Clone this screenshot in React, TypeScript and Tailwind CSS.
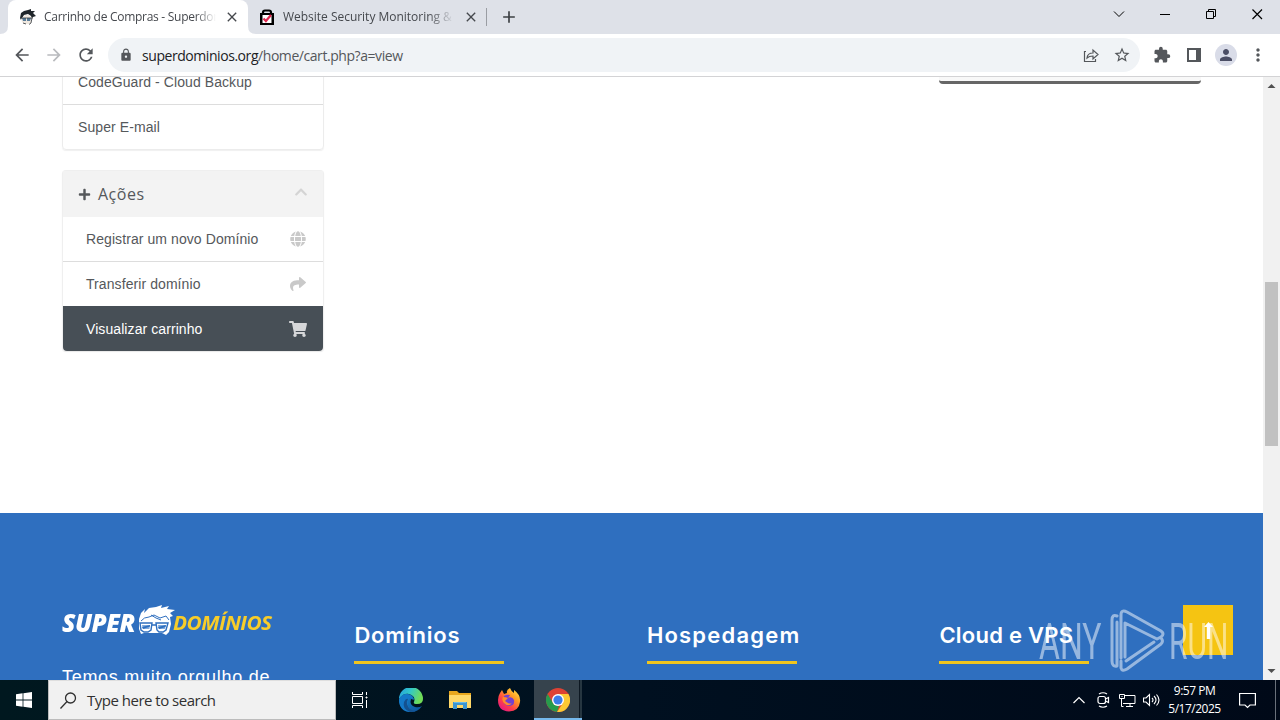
import React from 'react';
import { FaChevronUp, FaGlobe, FaPlus, FaShare, FaShoppingCart } from 'react-icons/fa';
import { MdAdd, MdArrowBack, MdArrowForward, MdClose, MdExtension, MdLock, MdMoreVert, MdPerson, MdRefresh, MdStarBorder } from 'react-icons/md';

function HeroHead({ className }: { className: string }) {
  return (
    <svg className={className} viewBox="0 0 38 31">
      <path fill="#fff" d="M1 14 3 8 7 4 6 8 11 3 18 2 24 0 23 3 31 1 29 4 37 5 32 8 35 11 32 12 33 19 31 27 28 30 24 28H6L3 29 1 24Z" />
      <path fill="none" stroke="#2f6fbf" strokeWidth="1" d="M3 16q3-4 8-4l5-2 6 3 6-2 3 4M13 10l5 3 5 2" />
      <path fill="none" stroke="#2f6fbf" strokeWidth="1.400" d="M2 18h12l-1 7-3 2H6l-3-2zM18 18h12l-2 7-3 2h-4l-2-2zM14 20h4" />
      <path fill="#7fa9dc" d="M4 20h8l-.6 4H5zM20 20h8l-1.200 4h-6z" />
      <path fill="#2f6fbf" d="M4 22l8-2v1.500L5 24zM20 22l8-2-.5 2-6.500 2z" />
    </svg>
  );
}

function HeroFavicon() {
  return (
    <svg className="size-4 shrink-0" viewBox="0 0 16 16">
      <path fill="#20262b" d="M0 9 1 4l3-2 4-1 3-1v2l4 0-2 2 3 3-3 1-1 2-1-3-3-2-4 1-3 5Z" />
      <path fill="#efe8e0" d="M1 10 5 6l4 0 3 3-1 5-2 1H4l-2-2z" />
      <path fill="#587c98" d="M2 9h4l0 3H3zM7 9h4l-1 3H7z" />
      <path fill="none" stroke="#30353a" strokeWidth=".8" d="M1 9h11M12 9l-1 5-2 1.500M3 14l3 1" />
    </svg>
  );
}

function LockFavicon() {
  return (
    <svg className="-ml-px size-4 shrink-0" viewBox="0 0 16 16">
      <path fill="none" stroke="#000" strokeWidth="2.2" d="M4 5V3.500q0-2 2-2h4q2 0 2 2V5" />
      <path fill="#000" d="M1 4h14v12H1z" />
      <path fill="#fff" d="M3.500 6h9v8h-9z" />
      <path fill="none" stroke="#e02850" strokeWidth="2.200" d="m4.500 9.500 2.400 2.500L12 6" />
    </svg>
  );
}

function TabStrip() {
  return (
    <header className="flex h-[34px] bg-[#dee1e8] pl-2">
      <div className="relative flex w-60 items-center rounded-t-lg bg-white pl-3">
        <svg className="absolute bottom-0 -left-2 size-2" viewBox="0 0 8 8"><path fill="#fff" d="M8 0v8H0q8 0 8-8z" /></svg>
        <svg className="absolute -right-2 bottom-0 size-2" viewBox="0 0 8 8"><path fill="#fff" d="M0 0v8h8q-8 0-8-8z" /></svg>
        <HeroFavicon />
        <span className="ml-2 w-[172px] overflow-hidden mask-r-from-88% text-[12px] tracking-[-0.28px] whitespace-nowrap text-[#45484d]">Carrinho de Compras - Superdominios</span>
        <MdClose className="ml-2 size-4 text-[#45484d]" />
      </div>
      <div className="my-2 flex w-[239px] items-center border-r border-[#9a9da3] pl-3">
        <LockFavicon />
        <span className="ml-2 w-[171px] overflow-hidden mask-r-from-85% text-[12px] tracking-[-0.02px] whitespace-nowrap text-[#45484d]">Website Security Monitoring &amp; Malware</span>
        <MdClose className="ml-[9px] size-4 text-[#45484d]" />
      </div>
      <MdAdd className="mt-[7px] ml-[12px] size-5 text-[#3c4043]" />
      <div className="ml-auto flex text-black">
        <svg className="h-[34px] w-[40px]" viewBox="0 0 40 34" fill="none" stroke="currentColor"><path d="m8 11.500 5 5 5-5" /></svg>
        <svg className="h-[34px] w-[46px]" viewBox="0 0 46 34" fill="none" stroke="currentColor"><path d="M14 14.500h10" /></svg>
        <svg className="h-[34px] w-[46px]" viewBox="0 0 46 34" fill="none" stroke="currentColor"><path d="M14.500 11.500h7v7h-7zM16.500 11.500v-2h7v7h-2" /></svg>
        <svg className="ml-[14px] h-[34px] w-[28px]" viewBox="0 0 28 34" fill="none" stroke="currentColor" strokeWidth="1.200"><path d="m.5 9.500 9.500 9.500M10 9.500.5 19" /></svg>
      </div>
    </header>
  );
}

function Toolbar() {
  return (
    <div className="flex h-[43px] items-center border-b border-[#d3d3d5] bg-white text-[#54575b]">
      <MdArrowBack className="ml-3 size-5" />
      <MdArrowForward className="ml-3 size-5 text-[#b9bbbe]" />
      <MdRefresh className="ml-3 size-5" />
      <div className="ml-3 flex h-[34px] w-[1032px] items-center rounded-full bg-[#f0f3f6] pr-2.5 pl-[11px]">
        <MdLock className="size-[14px]" />
        <span className="ml-[9px] text-[14px] tracking-[-0.44px] whitespace-nowrap"><span className="text-[#202124]">superdominios.org</span>/home/cart.php?a=view</span>
        <svg className="ml-auto size-4" viewBox="0 0 16 16" fill="none" stroke="currentColor" strokeWidth="1.200"><path d="M3 4.500H1.500v10h11V12M4 11q.5-5 6-5V3l5 4.500L10 12V9q-4 0-6 2z" /></svg>
        <MdStarBorder className="mr-[-1px] ml-[14px] size-[18px]" />
      </div>
      <MdExtension className="ml-[13px] size-[18px]" />
      <svg className="ml-[15px] size-4" viewBox="0 0 16 16"><path fill="currentColor" fillRule="evenodd" d="M1 1h14v14H1zM3 3v10h7V3z" /></svg>
      <span className="ml-[13px] grid size-[22px] place-items-center rounded-full bg-[#d9dce8]"><MdPerson className="size-[18px] text-[#4b4e65]" /></span>
      <MdMoreVert className="ml-[11px] size-5" />
    </div>
  );
}

function Sidebar() {
  return (
    <aside className="ml-[62px] w-[262px] font-['Liberation_Sans',sans-serif] text-[14px] tracking-[0.08px] text-[#55585b]">
      <div className="-mt-[18px] rounded-b border border-[#ececec] shadow-[0_1px_1px_#00000010]">
        <div className="h-[45px] border-b border-[#dddddd] px-[15px] leading-[44px]">CodeGuard - Cloud Backup</div>
        <div className="h-[44px] px-[15px] leading-[44px]">Super E-mail</div>
      </div>
      <div className="mt-[20px] rounded border border-[#efefef] border-b-0 shadow-[0_1px_1px_#00000018]">
        <div className="flex h-[46px] items-center bg-[#f3f3f3] px-[15px] font-['Open_Sans',sans-serif] text-[16px] tracking-[0.5px]">
          <FaPlus className="size-[13px]" />
          <span className="ml-[7px]">Ações</span>
          <FaChevronUp className="mb-[5px] ml-auto size-[14px] text-[#d4d4d4]" />
        </div>
        <div className="flex h-[45px] items-center border-b border-[#dddddd] pr-[17px] pl-[23px]">Registrar um novo Domínio<FaGlobe className="ml-auto size-4 text-[#c9c9c9]" /></div>
        <div className="flex h-[44px] items-center pr-[17px] pl-[23px]">Transferir domínio<FaShare className="ml-auto size-4 text-[#c9c9c9]" /></div>
        <div className="flex h-[45px] items-center rounded-b bg-[#474f56] pt-px pr-[16px] pl-[23px] text-white">Visualizar carrinho<FaShoppingCart className="ml-auto size-[18px] text-[#d6d7d9]" /></div>
      </div>
    </aside>
  );
}

function FooterColumn({ title, spacing }: { title: string; spacing: string }) {
  return (
    <div className="w-[292.5px] px-[15px] pt-[106px]">
      <h4 className={`h-[42px] font-['Inter',sans-serif] text-[22px] leading-[32px] font-semibold whitespace-nowrap text-white ${spacing}`}>{title}</h4>
      <div className="h-[3px] w-[150px] bg-[#f0c51e]" />
    </div>
  );
}

function Watermark() {
  return (
    <div className="absolute top-[609px] left-[1039px] flex h-[63px] w-[194px] items-center font-['Roboto',sans-serif] text-[50px] leading-[63px] text-white opacity-50">
      <span className="w-[70px] pt-[3px]"><span className="inline-block origin-left scale-x-[0.64]">ANY</span></span>
      <svg className="h-[63px] w-[56px] shrink-0" viewBox="0 0 56 63" fill="none" stroke="#fff" strokeWidth="3" strokeLinejoin="round" strokeLinecap="round">
        <path d="M8 7Q3 5 3 11v41q0 6 5 5V13M12 49V6q0-6 6-3l34 19q4 3 0 6l-4 2L16 14v34M12 52v7q1 4 6 1l34-25q3-3 0-6" />
        <path d="M17 52 45 33" />
      </svg>
      <span className="ml-[4px] w-[64px] pt-[3px]"><span className="inline-block origin-left scale-x-[0.6]">RUN</span></span>
    </div>
  );
}

function Footer() {
  return (
    <footer className="mt-auto flex h-[167px] overflow-hidden bg-[#2f6fbf] pl-[46.900px]">
      <div className="w-[292.5px] px-[15px] pt-[92px]">
        <div className="flex h-[34px] w-[212px] font-['Open_Sans',sans-serif] font-extrabold whitespace-nowrap italic">
          <span className="w-[76px] pt-[2px]"><span className="inline-block origin-left scale-x-[1.020] text-[24px] leading-[32px] tracking-[-0.500px] text-white">SUPER</span></span>
          <HeroHead className="h-[31px] w-[38px] shrink-0" />
          <span className="-ml-[3px] pt-[2px]"><span className="inline-block origin-left scale-x-[1.040] text-[20px] leading-[32px] font-bold tracking-[-0.500px] text-[#f8cd29]">DOMÍNIOS</span></span>
        </div>
        <p className="mt-[24px] font-['Liberation_Sans',sans-serif] text-[18px] leading-[29px] tracking-[0.740px] whitespace-nowrap text-white">Temos muito orgulho de</p>
      </div>
      <FooterColumn title="Domínios" spacing="tracking-[0.8px]" />
      <FooterColumn title="Hospedagem" spacing="tracking-[1.2px]" />
      <FooterColumn title="Cloud e VPS" spacing="tracking-[0.25px]" />
    </footer>
  );
}

function Scrollbar() {
  return (
    <div className="flex w-[17px] flex-col items-center bg-[#f1f1f1]">
      <svg className="h-[17px] w-[17px]" viewBox="0 0 17 17"><path fill="#505050" d="m4.500 11 4-4 4 4z" /></svg>
      <div className="mt-[188px] h-[164px] w-[13px] bg-[#c1c1c1]" />
      <svg className="mt-auto h-[17px] w-[17px]" viewBox="0 0 17 17"><path fill="#505050" d="m4.500 6 4 4 4-4z" /></svg>
    </div>
  );
}

function EdgeIcon() {
  return (
    <svg className="size-6" viewBox="0 0 24 24">
      <defs>
        <linearGradient id="edgeTop" x1="0" y1="0" x2="1" y2=".3"><stop stopColor="#249ddf" /><stop offset=".5" stopColor="#32c8c8" /><stop offset="1" stopColor="#70dc57" /></linearGradient>
        <linearGradient id="edgeLow" x1="0" y1="0" x2="1" y2="1"><stop stopColor="#1688d2" /><stop offset="1" stopColor="#0d5198" /></linearGradient>
      </defs>
      <path fill="url(#edgeLow)" d="M0 12Q2 6 8 6q6 0 7 6l-3-1q-2 6 4 8 4 1 7-1-4 6-11 6A12 12 0 0 1 0 12z" />
      <path fill="url(#edgeTop)" d="M0 11A12 12 0 0 1 24 11q0 5-6 5-4 0-3-2 2-6-5-8Q4 5 0 11z" />
      <path fill="#1479c8" d="M0 11q5-7 11-4 3 1 4 4l-4-1q-5 5 0 11l1 3Q0 24 0 11z" />
      <path fill="#14518f" d="M9 11q-3 5 2 10 4 3 8 1-3 2-8 2-8-3-6-10 2-4 4-3z" />
    </svg>
  );
}

function FirefoxIcon() {
  return (
    <svg className="size-6" viewBox="0 0 24 24">
      <defs>
        <linearGradient id="fox" x1="1" y1="0" x2=".2" y2="1"><stop stopColor="#fff44f" /><stop offset=".4" stopColor="#ff9a24" /><stop offset=".7" stopColor="#ff4047" /><stop offset="1" stopColor="#e31587" /></linearGradient>
      </defs>
      <path fill="url(#fox)" d="M3 5 5 2l2 4 3-1q-1-3 3-5 1 3 4 5V2q7 5 6 12-1 9-11 9.500Q1 23 1 12q0-4 2-7z" />
      <path fill="#7340d1" d="M7 8q3-2 6-1l-2 3q4-2 6 2 1 6-6 6-6-2-4-7z" />
      <path fill="#ff8b29" d="M6 9q3 0 5 1l-3 3 3 2q2 1 4 0-3 4-7 1-4-3-2-7z" />
    </svg>
  );
}

function ExplorerIcon() {
  return (
    <svg className="h-5 w-[22px]" viewBox="0 0 22 20">
      <path fill="#e8a71d" d="M0 1h8l2 2h12v15H0z" />
      <path fill="#ffd868" d="M0 5h22v13H0z" />
      <path fill="#3c95d0" d="M4 19v-7h14v7h-4v-4H8v4z" />
      <path fill="#65b9e8" d="M5 12h12v1H5z" />
    </svg>
  );
}

function ChromeIcon() {
  return (
    <svg className="size-6" viewBox="0 0 24 24">
      <circle cx="12" cy="12" r="12" fill="#dd4234" />
      <path fill="#279b4c" d="M1.600 6 7 15q2 3 6 3l-2 6A12 12 0 0 1 1.600 6z" />
      <path fill="#fcc934" d="M12 6h10.400A12 12 0 0 1 11 24l6-9q1-5-5-9z" />
      <circle cx="12" cy="12" r="6" fill="#fff" />
      <circle cx="12" cy="12" r="4.600" fill="#3b7de9" />
    </svg>
  );
}

function Taskbar() {
  return (
    <div className="flex h-10 bg-gradient-to-r from-[#00181f] via-[#001020] to-[#000918] text-white">
      <div className="grid w-12 place-items-center">
        <svg className="size-4" viewBox="0 0 16 16" fill="#fff"><path d="m0 2.200 6.600-.9v6.300H0zM7.400 1.200 16 0v7.600H7.400zM0 8.400h6.600v6.300L0 13.800zM7.400 8.400H16V16l-8.600-1.200z" /></svg>
      </div>
      <div className="flex w-[288px] items-center border border-[#bcbcbc] border-t-[#dedede] bg-[#f1f1f1] pl-[11px] text-[#303030]">
        <svg className="size-[17px]" viewBox="0 0 17 17" fill="none" stroke="currentColor" strokeWidth="1.300"><circle cx="10.500" cy="6" r="5" /><path d="m7 9.500-6.500 7" /></svg>
        <span className="ml-[10px] text-[15px] tracking-[-0.500px] whitespace-nowrap">Type here to search</span>
      </div>
      <div className="grid w-[48px] place-items-center">
        <svg className="h-4 w-4" viewBox="0 0 16 16" fill="none" stroke="currentColor"><path d="M.5 0v2.500h10V0M.5 16v-2.500h10V16M.5 4.500h10v7H.5zM14.500 0v3M14.500 8v8" /><path fill="currentColor" d="M14 5h1v1h-1z" /></svg>
      </div>
      <div className="grid w-[54px] place-items-center"><EdgeIcon /></div>
      <div className="grid w-[44px] place-items-center"><ExplorerIcon /></div>
      <div className="grid w-[52px] place-items-center pl-[2px]"><FirefoxIcon /></div>
      <div className="flex w-[48px] border-b-2 border-[#76b9ed] bg-[#36434d]">
        <div className="grid w-[45px] place-items-center pt-[2px] pl-[2px]"><ChromeIcon /></div>
        <div className="w-[3px] border-l border-[#0d1822] bg-[#263640]" />
      </div>
      <div className="ml-auto flex items-center">
        <svg className="h-3 w-3" viewBox="0 0 12 12" fill="none" stroke="currentColor" strokeWidth="1.200"><path d="m.5 9 5.500-5.500L11.500 9" /></svg>
        <svg className="ml-[12px] h-[18px] w-[13px]" viewBox="0 0 13 18" fill="none" stroke="currentColor" strokeWidth="1.200"><rect x="1" y="5.500" width="7.500" height="7" rx="2" /><path d="m8.500 8 3-1.500v5l-3-1.500M2 3q4-2.500 8 0M2 15q4 2.500 8 0" /></svg>
        <svg className="ml-[9px] h-[15px] w-[17px]" viewBox="0 0 17 15" fill="none" stroke="currentColor"><path d="M6 2.500h10v8H4M11 10.500v3M7 13.500h7M.5 1.500h5v4h-5zM2.500 3.500h1M2.500 5.500v8h2" /></svg>
        <svg className="ml-[7px] h-[14px] w-[17px]" viewBox="0 0 17 14" fill="none" stroke="currentColor" strokeWidth="1.100"><path d="M.5 5h2.500l3.500-3.500v11L3 9H.5zM9 5q2 2 0 4M11 3q4 4 0 8M13.500 1.500q5 5.500 0 11" /></svg>
        <div className="ml-[4px] w-[61px] text-center text-[12px] leading-[18px] tracking-[-0.500px] whitespace-nowrap">9:57 PM<br />5/17/2025</div>
        <svg className="ml-[14px] h-[17px] w-[17px]" viewBox="0 0 17 17" fill="none" stroke="currentColor" strokeWidth="1.200"><path d="M.6 1.500h15.800v11.500H11L8.500 15.500 6 13H.6z" /></svg>
        <div className="ml-[19px] h-10 w-[5px] border-l border-[#69707a]" />
      </div>
    </div>
  );
}

export default function App() {
  return (
    <div className="relative flex h-[720px] w-[1280px] flex-col overflow-hidden bg-white font-['Open_Sans',sans-serif]">
      <TabStrip />
      <Toolbar />
      <main className="flex h-[603px]">
        <div className="flex w-[1263px] flex-col overflow-hidden">
          <div className="flex items-start">
            <Sidebar />
            <div className="ml-[615px] h-[7px] w-[262px] rounded-b border-b-[3px] border-[#666666] bg-[#f8f8f8]" />
          </div>
          <Footer />
        </div>
        <Scrollbar />
      </main>
      <Taskbar />
      <div className="absolute top-[605px] left-[1183px] grid size-[50px] place-items-center bg-[#f5c412]">
        <svg className="h-[17px] w-[9px]" viewBox="0 0 9 17" fill="#fff"><path d="M4.500 0 9 5H6.200v12H2.800V5H0z" /></svg>
      </div>
      <Watermark />
    </div>
  );
}
